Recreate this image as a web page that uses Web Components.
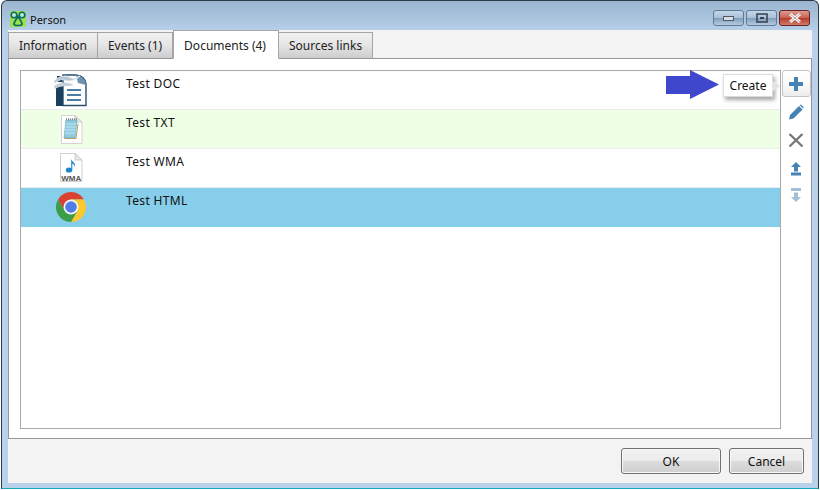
<!DOCTYPE html>
<html>
<head>
<meta charset="utf-8">
<title>Person</title>
<style>
    html, body { margin: 0; padding: 0; background: #fff; }
    body { font: 12px "Noto Sans", "Liberation Sans", sans-serif; color: #111; }
</style>
</head>
<body>

<person-window caption="Person">
    <svg slot="icon" width="18" height="18" viewBox="0 0 18 18">
        <rect x="1" y="1" width="16" height="16" rx="2" fill="#9be24a"/>
        <circle cx="5" cy="5" r="2.8" fill="#bfe9dc" stroke="#0d6b66" stroke-width="1.6"/>
        <circle cx="13" cy="5" r="2.8" fill="#bfe9dc" stroke="#0d6b66" stroke-width="1.6"/>
        <path d="M9 6.5 C7 10 5 12 5 14 C5 16 13 16 13 14 C13 12 11 10 9 6.5Z" fill="#9be24a" stroke="#0d6b66" stroke-width="1.7"/>
    </svg>

    <tab-strip>
        <strip-tab>Information</strip-tab>
        <strip-tab>Events (1)</strip-tab>
        <strip-tab active>Documents (4)</strip-tab>
        <strip-tab>Sources links</strip-tab>
    </tab-strip>

    <tab-panel>
        <doc-list>
            <doc-row label="Test DOC">
                <svg width="34" height="34" viewBox="0 0 34 34">
                    <path d="M9 2 H22 Q31 3 32 11 V32.500 H9Z" fill="#fff" stroke="#27506f" stroke-width="1.400"/>
                    <path d="M2 13 H9 V33 H2Z" fill="#1c3f5e"/>
                    <path d="M3 3 H8 V9 H3Z" fill="#1c3f5e"/>
                    <path d="M22 2 Q31 3 32 12 L24 10Z" fill="#6f93b0"/>
                    <path d="M0 8 C6 2 13 2 19 6 L26 3 C20 9 12 9 8 6 C6 7 3 8 0 11Z" fill="#b9c4cf" stroke="#e7edf2" stroke-width="1"/>
                    <path d="M0 13 C7 8 14 9 20 12 C14 14 7 12 1 16Z" fill="#c7d0d8"/>
                    <path d="M13 17 H27 M13 22 H27 M13 27 H27" stroke="#4c7ea5" stroke-width="2"/>
                </svg>
            </doc-row>
            <doc-row label="Test TXT" tone="green">
                <svg width="26" height="32" viewBox="0 0 26 32">
                    <path d="M3.500 2.500 H17 L24 9 V30.500 H3.500Z" fill="#fff" stroke="#d4d4d4"/>
                    <path d="M17 2.500 V9 H24Z" fill="#e6e6e6" stroke="#cfcfcf"/>
                    <path d="M8 7 H19 L17 25 H6Z" fill="#8fcbe0" stroke="#5f9fb8" stroke-width=".6"/>
                    <path d="M8 11 H18 M7.500 14 H18 M7 17 H17.500 M7 20 H17" stroke="#d2eef6" stroke-width=".8"/>
                    <path d="M8 6 H19" stroke="#444" stroke-width="1" stroke-dasharray="1 1"/>
                    <path d="M6.500 25.500 H18 L20 11" fill="none" stroke="#b89c62" stroke-width="1"/>
                </svg>
            </doc-row>
            <doc-row label="Test WMA">
                <svg width="26" height="32" viewBox="0 0 26 32">
                    <path d="M2.500 1.500 H17 L24 8 V29.500 H2.500Z" fill="#fff" stroke="#cfcfcf"/>
                    <path d="M17 1.500 V8 H24Z" fill="#e6e6e6" stroke="#cfcfcf"/>
                    <ellipse cx="11" cy="18" rx="3.200" ry="2.600" fill="#1b86cf"/>
                    <path d="M13.200 18 V7 C14 10 18 10.500 17 15 C16.500 12.500 15 12 14.300 11.500 V18Z" fill="#1b86cf"/>
                    <text x="13.200" y="28.500" text-anchor="middle" font-family="Liberation Sans, sans-serif" font-size="8" font-weight="700" fill="#555">WMA</text>
                </svg>
            </doc-row>
            <doc-row label="Test HTML" tone="selected">
                <svg width="32" height="32" viewBox="-16 -16 32 32">
                    <path d="M-13 -7.500 A15 15 0 0 1 13 -7.500 L0 -7.500 L-6.500 3.750Z" fill="#d8412f"/>
                    <path d="M13 -7.500 A15 15 0 0 1 0 15 L6.500 3.750 L0 -7.500Z" fill="#fbc92d"/>
                    <path d="M0 15 A15 15 0 0 1 -13 -7.500 L-6.500 3.750 L6.500 3.750Z" fill="#3c9d49"/>
                    <circle r="7.500" fill="#f5f5f5"/>
                    <circle r="5.800" fill="#4f7fe6"/>
                </svg>
            </doc-row>
        </doc-list>

        <tool-bar>
            <tool-button hot>
                <svg width="16" height="16" viewBox="0 0 16 16"><path d="M6 1 H10 V6 H15 V10 H10 V15 H6 V10 H1 V6 H6Z" fill="#4682b4"/></svg>
            </tool-button>
            <tool-button>
                <svg width="16" height="16" viewBox="0 0 16 16"><path d="M1 15.500 L2 11 L11 2 L14.500 5.500 L5.500 14.500Z M12 1 L13 0.500 L15.500 3 L15.500 4 L15 4.500 L11.800 1.300Z" fill="#4682b4"/></svg>
            </tool-button>
            <tool-button>
                <svg width="16" height="16" viewBox="0 0 16 16"><path d="M1.500 2 L14.500 14.500 M14.500 2 L1.500 14.500" stroke="#767676" stroke-width="2.300"/></svg>
            </tool-button>
            <tool-button>
                <svg width="16" height="16" viewBox="0 0 16 16"><path d="M8 2 L13 7 H10 V11.500 H6 V7 H3Z M3 12.500 H13 V15.500 H3Z" fill="#4682b4"/></svg>
            </tool-button>
            <tool-button>
                <svg width="16" height="16" viewBox="0 0 16 16"><path d="M3 0 H13 V3 H3Z M6 4.500 H10 V9 H13 L8 14 L3 9 H6Z" fill="#a6bfd8"/></svg>
            </tool-button>
        </tool-bar>

        <hint-callout>Create</hint-callout>
    </tab-panel>

    <dialog-button slot="footer" style="width:100px">OK</dialog-button>
    <dialog-button slot="footer" style="width:75px">Cancel</dialog-button>
</person-window>

<script>
    // small helper, every element here is just a template + open shadow root
    class Base extends HTMLElement {
        constructor(html) {
            super();
            this.attachShadow({ mode: 'open' });
            this.shadowRoot.innerHTML = html;
        }
    }

    class PersonWindow extends Base {
        constructor() {
            super(`
                <style>
                    :host {
                        display: flex;
                        flex-direction: column;
                        box-sizing: border-box;
                        width: 820px;
                        height: 490px;
                        padding: 0 1px 1px 1px;
                        background: #fff;
                    }
                    .frame {
                        flex: 1;
                        display: flex;
                        flex-direction: column;
                        border: 1px solid #2b3a47;
                        border-bottom-color: #17a8bd;
                        border-radius: 6px 6px 0 0;
                        padding: 0 6px 5px 6px;
                        min-height: 0;
                        background: linear-gradient(#9bb5d0 0, #b9d1ea 32px);
                    }
                    .title {
                        height: 29px;
                        box-sizing: border-box;
                        display: flex;
                        align-items: center;
                        gap: 3px;
                        padding: 7px 2px 0 1px;
                        color: #111;
                    }
                    .caption { flex: 1; font-size: 11px; }
                    .caps { display: flex; gap: 2px; margin-top: -2px; }
                    .cap {
                        width: 31px;
                        height: 16px;
                        box-sizing: border-box;
                        border: 1px solid #5f7a96;
                        border-radius: 3px;
                        display: flex;
                        align-items: center;
                        justify-content: center;
                        background: linear-gradient(#c5d6e8 0, #a9c0d8 50%, #7f9cba 51%, #b6cbe0 100%);
                    }
                    .cap.close {
                        border-color: #6d2320;
                        background: linear-gradient(#dc9b92 0, #c8604f 50%, #b53b2b 51%, #d27b69 100%);
                    }
                    .client {
                        flex: 1;
                        display: flex;
                        flex-direction: column;
                        background: #f3f3f3;
                        min-height: 0;
                    }
                    .body { flex: 1; display: flex; flex-direction: column; min-height: 0; }
                    .footer {
                        height: 44px;
                        display: flex;
                        justify-content: flex-end;
                        align-items: flex-start;
                        gap: 8px;
                        padding: 9px 8px 0 0;
                        box-sizing: border-box;
                    }
                </style>
                <div class="frame">
                    <div class="title">
                        <slot name="icon"></slot>
                        <span class="caption"></span>
                        <div class="caps">
                            <div class="cap"><svg width="14" height="8"><rect x="1.500" y="2.500" width="10" height="4" fill="#d8dde2" stroke="#4d5b69"/></svg></div>
                            <div class="cap"><svg width="14" height="10"><rect x="2" y="1" width="10" height="8" fill="none" stroke="#33404d" stroke-width="1.500"/><rect x="5" y="4" width="4" height="2" fill="#33404d"/></svg></div>
                            <div class="cap close"><svg width="14" height="10"><path d="M2 1 L12 9 M12 1 L2 9" stroke="#fff" stroke-width="3"/><path d="M2 1 L12 9 M12 1 L2 9" stroke="#7a3a33" stroke-width=".5"/></svg></div>
                        </div>
                    </div>
                    <div class="client">
                        <div class="body"><slot></slot></div>
                        <div class="footer"><slot name="footer"></slot></div>
                    </div>
                </div>
            `);
        }
        connectedCallback() {
            this.shadowRoot.querySelector('.caption').textContent = this.getAttribute('caption');
        }
    }

    class TabStrip extends Base {
        constructor() {
            super(`
                <style>
                    :host {
                        display: flex;
                        align-items: flex-end;
                        gap: 0;
                        height: 29px;
                        margin-bottom: -1px;
                        position: relative;
                        z-index: 1;
                    }
                </style>
                <slot></slot>
            `);
        }
    }

    class StripTab extends Base {
        constructor() {
            super(`
                <style>
                    :host {
                        display: block;
                        box-sizing: border-box;
                        height: 27px;
                        padding: 4px 10px 0;
                        margin-right: -1px;
                        border: 1px solid #a5a5a8;
                        border-bottom-color: #97979b;
                        background: linear-gradient(#f0f0f0 0, #e6e6e6 45%, #cdcdcd 100%);
                        color: #222;
                    }
                    :host([active]) {
                        height: 29px;
                        padding: 6px 12px 0 10px;
                        position: relative;
                        z-index: 2;
                        background: #fff;
                        border-bottom-color: #fff;
                        margin-left: 1px;
                    }
                </style>
                <slot></slot>
            `);
        }
    }

    class TabPanel extends Base {
        constructor() {
            super(`
                <style>
                    :host {
                        flex: 1;
                        display: flex;
                        position: relative;
                        box-sizing: border-box;
                        border: 1px solid #97979b;
                        background: #fff;
                        padding: 11px 0 9px 11px;
                        min-height: 0;
                    }
                </style>
                <slot></slot>
            `);
        }
    }

    class DocList extends Base {
        constructor() {
            super(`
                <style>
                    :host {
                        flex: 1;
                        display: flex;
                        flex-direction: column;
                        box-sizing: border-box;
                        border: 1px solid #aaa8a8;
                        background: #fff;
                    }
                </style>
                <slot></slot>
            `);
        }
    }

    class DocRow extends Base {
        constructor() {
            super(`
                <style>
                    :host {
                        display: grid;
                        grid-template-columns: 100px 1fr;
                        box-sizing: border-box;
                        height: 39px;
                        border-bottom: 1px solid #ececec;
                        background: #fff;
                    }
                    :host([tone="green"]) { background: #eeffe6; }
                    :host([tone="selected"]) { background: #87ceeb; border-bottom-color: #87ceeb; }
                    .icon { display: flex; align-items: center; justify-content: center; }
                    .label { padding: 4px 0 0 5px; color: #111; letter-spacing: .35px; }
                </style>
                <div class="icon"><slot></slot></div>
                <div class="label"></div>
            `);
        }
        connectedCallback() {
            this.shadowRoot.querySelector('.label').textContent = this.getAttribute('label');
        }
    }

    class ToolBar extends Base {
        constructor() {
            super(`
                <style>
                    :host {
                        display: flex;
                        flex-direction: column;
                        align-items: center;
                        width: 30px;
                        flex: none;
                    }
                </style>
                <slot></slot>
            `);
        }
    }

    class ToolButton extends Base {
        constructor() {
            super(`
                <style>
                    :host {
                        display: flex;
                        align-items: center;
                        justify-content: center;
                        box-sizing: border-box;
                        width: 29px;
                        height: 28px;
                    }
                    :host([hot]) {
                        height: 27px;
                        margin-bottom: 1px;
                        border: 1px solid #c4c4c4;
                        border-radius: 3px;
                        background: linear-gradient(#fff 0, #fafafa 50%, #ececec 100%);
                    }
                    ::slotted(svg) { display: block; }
                </style>
                <slot></slot>
            `);
        }
    }

    // tooltip and the blue arrow lie over the list, so these are absolute
    class HintCallout extends Base {
        constructor() {
            super(`
                <style>
                    :host {
                        position: absolute;
                        top: 11px;
                        right: 30px;
                        display: flex;
                        align-items: center;
                    }
                    .arrow { display: block; margin-right: 4px; }
                    .tip {
                        position: relative;
                        box-sizing: border-box;
                        width: 50px;
                        height: 23px;
                        margin-right: 8px;
                        text-align: center;
                        line-height: 21px;
                        background: #fff;
                        border: 1px solid #dcdcdc;
                        box-shadow: 2px 3px 4px rgba(0,0,0,.35);
                        color: #111;
                    }
                    .tip::after {
                        content: "";
                        position: absolute;
                        right: -8px;
                        top: 5px;
                        border-left: 8px solid #e4e4e4;
                        border-top: 6px solid transparent;
                        border-bottom: 6px solid transparent;
                    }
                </style>
                <svg class="arrow" width="53" height="30" viewBox="0 0 53 30"><path d="M0 6 H24 V0 L53 14.500 L24 29 V24 H0Z" fill="#3f48cc"/></svg>
                <div class="tip"><slot></slot></div>
            `);
        }
    }

    class DialogButton extends Base {
        constructor() {
            super(`
                <style>
                    :host {
                        display: flex;
                        align-items: center;
                        justify-content: center;
                        box-sizing: border-box;
                        height: 26px;
                        border: 1px solid #707070;
                        border-radius: 3px;
                        background: linear-gradient(#f2f2f2 0, #ebebeb 48%, #dcdcdc 52%, #cfcfcf 100%);
                        box-shadow: inset 0 0 0 1px #f8f8f8;
                        color: #111;
                    }
                </style>
                <slot></slot>
            `);
        }
    }

    customElements.define('person-window', PersonWindow);
    customElements.define('tab-strip', TabStrip);
    customElements.define('strip-tab', StripTab);
    customElements.define('tab-panel', TabPanel);
    customElements.define('doc-list', DocList);
    customElements.define('doc-row', DocRow);
    customElements.define('tool-bar', ToolBar);
    customElements.define('tool-button', ToolButton);
    customElements.define('hint-callout', HintCallout);
    customElements.define('dialog-button', DialogButton);
</script>
</body>
</html>
